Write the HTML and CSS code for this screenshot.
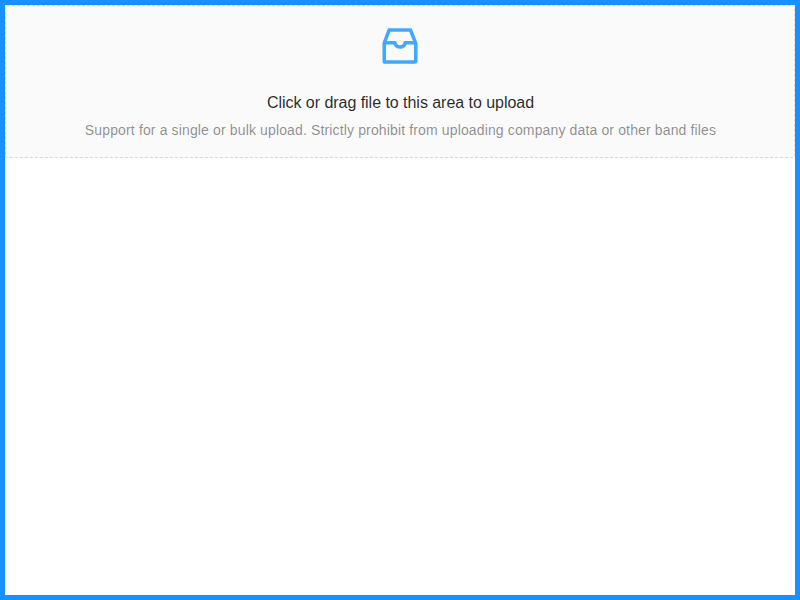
FILE: index.html
```html
<!DOCTYPE html>
<html lang="en">
<head>
<meta charset="utf-8">
<title>Upload</title>
<link rel="stylesheet" href="styles.css">
</head>
<body>
<main class="frame">
  <div class="upload-drag" role="button" tabindex="0">
    <p class="upload-icon">
      <svg viewBox="0 0 1024 1024" width="48" height="48" fill="currentColor" aria-hidden="true"><path d="M885.200 446.300l-.2-.8-112.200-285.100c-5-16.100-19.900-27.200-36.800-27.200H281.200c-17 0-32.100 11.300-36.900 27.600L139.400 443l-.3.700-.2.800c-1.300 4.900-1.700 9.900-1 14.800-.1 1.600-.2 3.200-.2 4.800V830a60.900 60.900 0 0 0 60.800 60.800h627.200c33.500 0 60.800-27.300 60.900-60.800V464.100c0-1.300 0-2.600-.1-3.700.4-4.900 0-9.600-1.300-14.100zm-295.800-43l-.3 15.700c-.8 44.900-31.800 75.100-77.100 75.100-22.100 0-41.100-7.100-54.800-20.600S436 441.200 435.600 419l-.3-15.700H229.500L309 210h399.200l81.700 193.300H589.400zm-375 76.800h157.300c24.300 57.100 76 90.800 140.400 90.800 33.700 0 65-9.400 90.300-27.200 22.200-15.600 39.500-37.400 50.700-63.600h156.500V814H214.400V480.100z"/></svg>
    </p>
    <p class="upload-text">Click or drag file to this area to upload</p>
    <p class="upload-hint">Support for a single or bulk upload. Strictly prohibit from uploading company data or other band files</p>
  </div>
</main>
</body>
</html>
```
FILE: styles.css
```css
* { box-sizing: border-box; }
body {
  margin: 0;
  font-family: "Liberation Sans", Arial, sans-serif;
  font-size: 14px;
  line-height: 1.5715;
}
.frame {
  height: 100vh;
  border: 5px solid #1890ff;
  background: #fff;
}
.upload-drag {
  padding: 16px 0;
  border: 1px dashed #d9d9d9;
  border-radius: 2px;
  background: #fafafa;
  text-align: center;
}
.upload-icon {
  margin: 0 0 20px;
  height: 48px;
  color: #40a9ff;
}
.upload-icon svg { display: block; margin: 0 auto; }
.upload-text {
  margin: 0 0 4px;
  padding-left: 1px;
  color: rgba(0, 0, 0, 0.85);
  font-size: 16px;
  letter-spacing: -0.035px;
}
.upload-hint {
  margin: 0;
  padding-left: 1px;
  color: rgba(0, 0, 0, 0.45);
  letter-spacing: 0.139px;
}
```
